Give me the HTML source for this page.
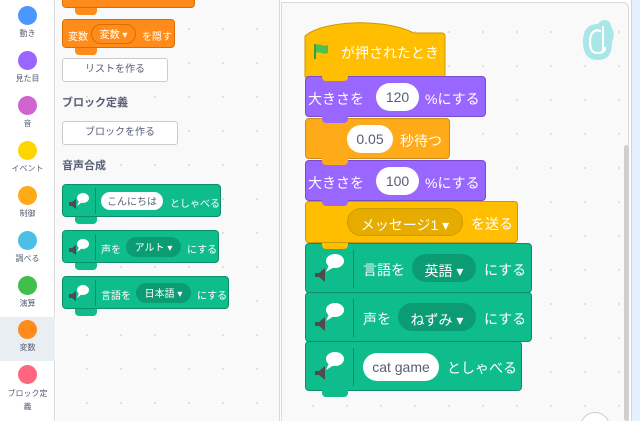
<!DOCTYPE html>
<html><head><meta charset="utf-8"><style>
*{margin:0;padding:0;box-sizing:border-box}
html,body{width:640px;height:421px;overflow:hidden}
body{background:#fff;font-family:"Liberation Sans","Noto Sans CJK JP",sans-serif;position:relative}
.a{position:absolute}
.cat{position:absolute;left:0;width:55px;text-align:center;font-size:8px;color:#575e75}
.cat i{display:block;width:19px;height:19px;border-radius:50%;margin:0 auto 3px}
.blk{position:absolute;color:#fff;white-space:nowrap;border-radius:4px}
.tab{position:absolute;height:7px;width:22px;border-radius:0 0 4px 4px}
.pill{position:absolute;background:#fff;color:#575e75;border-radius:20px;display:flex;align-items:center;justify-content:center;line-height:1}
.t{position:absolute;white-space:nowrap}
.dd{position:absolute;border-radius:20px;color:#fff;white-space:nowrap;display:flex;align-items:center;justify-content:center;line-height:1}
.s{padding-top:3px}.l{padding-top:5px}
.btn{position:absolute;border:1px solid #ccc;border-radius:3px;background:#fff;color:#575e75;font-size:10px;text-align:center}
.h{position:absolute;font-size:11px;font-weight:bold;color:#575e75}
.dots{background-image:radial-gradient(circle,#dcdcdc 0.9px,transparent 1.2px);background-size:34px 34px;background-position:14px 12px}
</style></head><body>
<div class="a" style="left:0;top:0;width:55px;height:421px;background:#fff;border-right:1px solid #d9d9d9"></div>
<div class="a" style="left:0;top:317px;width:55px;height:44px;background:#e9eef2"></div>
<div class="cat" style="top:6px"><i style="background:#4c97ff"></i>動き</div>
<div class="cat" style="top:51px"><i style="background:#9966ff"></i>見た目</div>
<div class="cat" style="top:96px"><i style="background:#cf63cf"></i>音</div>
<div class="cat" style="top:141px"><i style="background:#ffd500"></i>イベント</div>
<div class="cat" style="top:186px"><i style="background:#ffab19"></i>制御</div>
<div class="cat" style="top:231px"><i style="background:#4cbfe6"></i>調べる</div>
<div class="cat" style="top:276px"><i style="background:#40bf4a"></i>演算</div>
<div class="cat" style="top:320px"><i style="background:#ff8c1a"></i>変数</div>
<div class="cat" style="top:365px;line-height:13px"><i style="background:#ff6680"></i>ブロック定<br>義</div>
<div class="a dots" style="left:56px;top:0;width:224px;height:421px;background-color:#f9f9f9"></div>
<div class="blk" style="left:62px;top:-4px;width:133px;height:12px;background:#ff8c1a;border:1px solid #db6e00"></div>
<div class="tab" style="left:75px;top:8px;background:#ff8c1a"></div>
<div class="blk" style="left:62px;top:19px;width:113px;height:29px;background:#ff8c1a;border:1px solid #db6e00;font-size:10px">
 <span class="t" style="left:5px;top:8px">変数</span>
 <span class="dd s" style="left:28px;top:4px;width:45px;height:20px;border:1px solid #db6e00">変数 ▾</span>
 <span class="t" style="left:79px;top:8px">を隠す</span></div>
<div class="tab" style="left:75px;top:48px;background:#ff8c1a"></div>
<div class="btn" style="left:62px;top:58px;width:106px;height:24px;line-height:22px">リストを作る</div>
<div class="h" style="left:62px;top:94px">ブロック定義</div>
<div class="btn" style="left:62px;top:121px;width:116px;height:24px;line-height:22px">ブロックを作る</div>
<div class="h" style="left:62px;top:157px">音声合成</div>
<div class="blk" style="left:62px;top:184px;width:159px;height:33px;background:#0fbd8c;border:1px solid #0b8e69;font-size:10px">
 <svg class="a" style="left:4px;top:6px" width="26" height="22" viewBox="0 0 26 22"><path d="M2 11h3l4-3v10l-4-3H2z" fill="#4d4d4d"/><ellipse cx="16" cy="7" rx="6" ry="5" fill="#fff"/><path d="M12 10l-2 5 5-4z" fill="#fff"/></svg>
 <span class="a" style="left:32px;top:3px;width:1px;height:26px;background:#0b8e69"></span>
 <span class="pill s" style="left:38px;top:7px;width:62px;height:18px">こんにちは</span>
 <span class="t" style="left:107px;top:10px">としゃべる</span></div>
<div class="tab" style="left:75px;top:217px;background:#0fbd8c"></div>
<div class="blk" style="left:62px;top:230px;width:157px;height:33px;background:#0fbd8c;border:1px solid #0b8e69;font-size:10px">
 <svg class="a" style="left:4px;top:6px" width="26" height="22" viewBox="0 0 26 22"><path d="M2 11h3l4-3v10l-4-3H2z" fill="#4d4d4d"/><ellipse cx="16" cy="7" rx="6" ry="5" fill="#fff"/><path d="M12 10l-2 5 5-4z" fill="#fff"/></svg>
 <span class="a" style="left:32px;top:3px;width:1px;height:26px;background:#0b8e69"></span>
 <span class="t" style="left:38px;top:10px">声を</span>
 <span class="dd s" style="left:63px;top:6px;width:55px;height:20px;background:#0b9c73">アルト ▾</span>
 <span class="t" style="left:124px;top:10px">にする</span></div>
<div class="tab" style="left:75px;top:263px;background:#0fbd8c"></div>
<div class="blk" style="left:62px;top:276px;width:167px;height:33px;background:#0fbd8c;border:1px solid #0b8e69;font-size:10px">
 <svg class="a" style="left:4px;top:6px" width="26" height="22" viewBox="0 0 26 22"><path d="M2 11h3l4-3v10l-4-3H2z" fill="#4d4d4d"/><ellipse cx="16" cy="7" rx="6" ry="5" fill="#fff"/><path d="M12 10l-2 5 5-4z" fill="#fff"/></svg>
 <span class="a" style="left:32px;top:3px;width:1px;height:26px;background:#0b8e69"></span>
 <span class="t" style="left:38px;top:10px">言語を</span>
 <span class="dd s" style="left:73px;top:6px;width:55px;height:20px;background:#0b9c73">日本語 ▾</span>
 <span class="t" style="left:134px;top:10px">にする</span></div>
<div class="tab" style="left:75px;top:309px;background:#0fbd8c"></div>
<div class="a" style="left:279px;top:0;width:1px;height:421px;background:#d9d9d9"></div>
<div class="a dots" style="left:281px;top:2px;width:348px;height:430px;background-color:#f9f9f9;border:1px solid #d9d9d9;border-radius:0 6px 0 0"></div>
<div class="a" style="left:624px;top:145px;width:5px;height:276px;background:#cfcfcf;border-radius:3px"></div>
<div class="a" style="left:631px;top:0;width:9px;height:421px;background:#e5f0ff;border-left:1px solid #c9d6ea"></div>
<div class="a" style="left:580px;top:412px;width:30px;height:30px;border-radius:50%;border:1px solid #ccc;background:#fff"></div>
<svg class="a" style="left:578px;top:16px" width="40" height="48" viewBox="0 0 40 48"><path d="M5 26C5 14 10 8 20 8c3-6 14-5 13 3 4 4 3 11 1 15 0 12-4 18-14 18S5 38 5 26z" fill="#a8e6e8"/><path d="M22 15c-5-2-10 1-10 11s4 11 8 11 7-2 7-5M25 11v25" stroke="#fff" stroke-width="2.2" fill="none" stroke-linecap="round"/></svg>
<svg class="a" style="left:304px;top:18px" width="142" height="60" viewBox="0 0 142 60"><path d="M1 18C20 2 80 0 110 15h28a3 3 0 0 1 3 3v38a3 3 0 0 1-3 3H1z" fill="#ffbf00" stroke="#cc9900"/></svg>
<div class="blk" style="left:305px;top:34px;width:140px;height:40px;font-size:14px">
 <svg class="a" style="left:8px;top:8px" width="18" height="18" viewBox="0 0 18 18"><path d="M2 2v15" stroke="#45993d" stroke-width="2"/><path d="M3 3c4-2 6 2 12 0v8c-6 2-8-2-12 0z" fill="#4cbf56"/></svg>
 <span class="t" style="left:36px;top:9px">が押されたとき</span></div>
<div class="blk" style="left:305px;top:76px;width:181px;height:41px;background:#9966ff;border:1px solid #774dcb;font-size:14px">
 <span class="t" style="left:2px;top:12px">大きさを</span>
 <span class="pill" style="left:70px;top:6px;width:43px;height:28px">120</span>
 <span class="t" style="left:119px;top:12px">%にする</span></div>
<div class="tab" style="left:322px;top:116px;width:26px;background:#9966ff"></div>
<div class="blk" style="left:305px;top:118px;width:145px;height:41px;background:#ffab19;border:1px solid #cf8b17;font-size:14px">
 <span class="pill" style="left:41px;top:6px;width:46px;height:28px">0.05</span>
 <span class="t" style="left:94px;top:12px">秒待つ</span></div>
<div class="tab" style="left:322px;top:158px;width:26px;background:#ffab19"></div>
<div class="tab" style="left:322px;top:76px;width:26px;height:5px;background:#ffbf00"></div>
<div class="tab" style="left:322px;top:118px;width:26px;height:5px;background:#9966ff"></div>
<div class="blk" style="left:305px;top:160px;width:181px;height:41px;background:#9966ff;border:1px solid #774dcb;font-size:14px">
 <span class="t" style="left:2px;top:12px">大きさを</span>
 <span class="pill" style="left:70px;top:6px;width:43px;height:28px">100</span>
 <span class="t" style="left:119px;top:12px">%にする</span></div>
<div class="tab" style="left:322px;top:160px;width:26px;height:5px;background:#ffab19"></div>
<div class="blk" style="left:305px;top:201px;width:213px;height:42px;background:#ffbf00;border:1px solid #cc9900;font-size:14px">
 <span class="dd l" style="left:41px;top:6px;width:116px;height:28px;background:#e6ac00;border:1px solid #cc9900">メッセージ1 ▾</span>
 <span class="t" style="left:165px;top:12px">を送る</span></div>
<div class="tab" style="left:322px;top:200px;width:26px;height:6px;background:#9966ff"></div>
<div class="blk" style="left:305px;top:243px;width:227px;height:50px;background:#0fbd8c;border:1px solid #0b8e69;font-size:14px">
 <svg class="a" style="left:7px;top:9px" width="36" height="32" viewBox="0 0 36 32"><path d="M2 20h4l6-5v14l-6-5H2z" fill="#4d4d4d"/><ellipse cx="22" cy="8" rx="9" ry="7" fill="#fff"/><path d="M16 12l-3 7 8-5z" fill="#fff"/></svg>
 <span class="a" style="left:47px;top:6px;width:1px;height:38px;background:#0b8e69"></span>
 <span class="t" style="left:57px;top:16px">言語を</span>
 <span class="dd l" style="left:106px;top:10px;width:64px;height:28px;background:#0b9c73">英語 ▾</span>
 <span class="t" style="left:178px;top:16px">にする</span></div>
<div class="tab" style="left:322px;top:243px;width:26px;height:6px;background:#ffbf00"></div>
<div class="blk" style="left:305px;top:292px;width:227px;height:50px;background:#0fbd8c;border:1px solid #0b8e69;font-size:14px">
 <svg class="a" style="left:7px;top:9px" width="36" height="32" viewBox="0 0 36 32"><path d="M2 20h4l6-5v14l-6-5H2z" fill="#4d4d4d"/><ellipse cx="22" cy="8" rx="9" ry="7" fill="#fff"/><path d="M16 12l-3 7 8-5z" fill="#fff"/></svg>
 <span class="a" style="left:47px;top:6px;width:1px;height:38px;background:#0b8e69"></span>
 <span class="t" style="left:57px;top:16px">声を</span>
 <span class="dd l" style="left:92px;top:10px;width:78px;height:28px;background:#0b9c73">ねずみ ▾</span>
 <span class="t" style="left:178px;top:16px">にする</span></div>
<div class="blk" style="left:305px;top:341px;width:217px;height:50px;background:#0fbd8c;border:1px solid #0b8e69;font-size:14px">
 <svg class="a" style="left:7px;top:9px" width="36" height="32" viewBox="0 0 36 32"><path d="M2 20h4l6-5v14l-6-5H2z" fill="#4d4d4d"/><ellipse cx="22" cy="8" rx="9" ry="7" fill="#fff"/><path d="M16 12l-3 7 8-5z" fill="#fff"/></svg>
 <span class="a" style="left:47px;top:6px;width:1px;height:38px;background:#0b8e69"></span>
 <span class="pill" style="left:57px;top:11px;width:76px;height:28px">cat game</span>
 <span class="t" style="left:141px;top:16px">としゃべる</span></div>
<div class="tab" style="left:322px;top:390px;width:26px;background:#0fbd8c"></div>
</body></html>
